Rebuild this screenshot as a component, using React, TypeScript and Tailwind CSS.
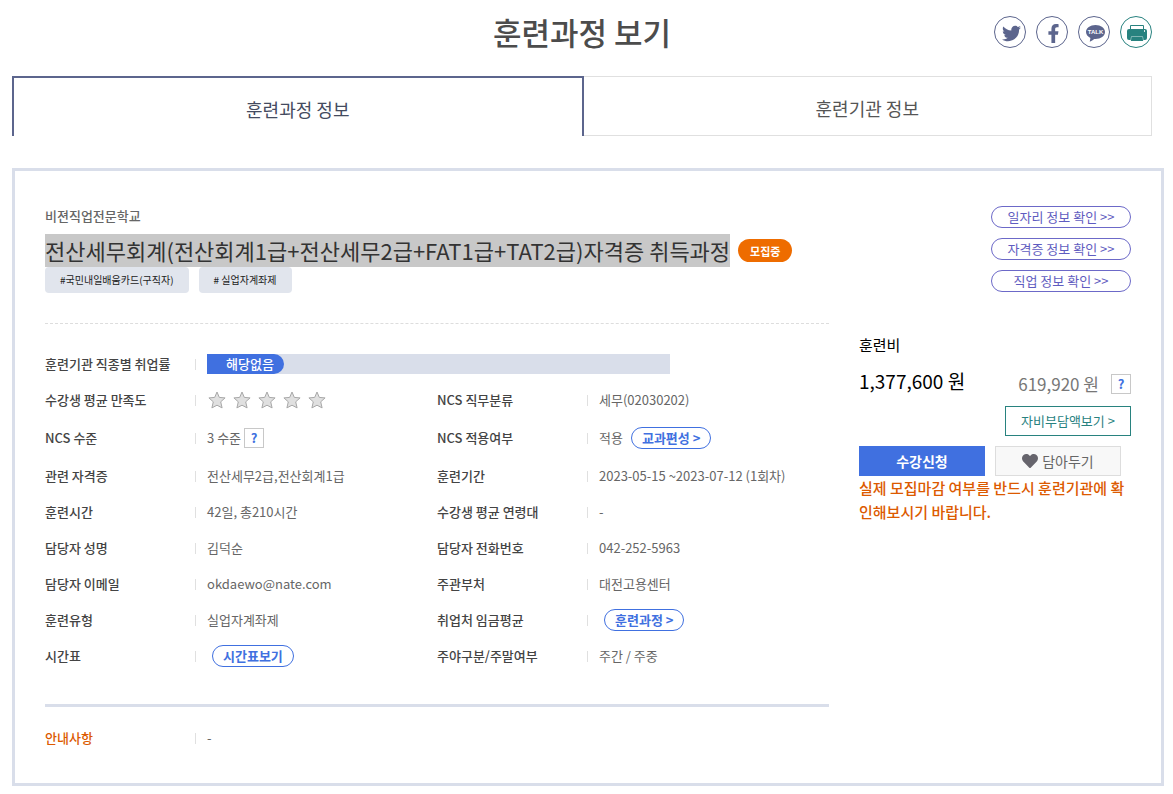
import clsx from "clsx";
import { FC, ReactNode } from "react";
import { FaFacebookF, FaHeart, FaTwitter } from "react-icons/fa";

const TalkIcon: FC = () => (
  <svg viewBox="0 0 38 34" className="h-[17px] w-[19px]" aria-hidden="true">
    <path
      d="M19 0C8.500 0 0 6.300 0 14c0 5 3.500 9.300 8.800 11.800L7.500 33.500c3.500-1.500 6.500-3.800 9-5.600l2.500.1c10.500 0 19-6.300 19-14S29.500 0 19 0z"
      fill="currentColor"
    />
    <text
      x="19"
      y="18"
      textAnchor="middle"
      fill="#fff"
      className="font-['Liberation_Sans',sans-serif] text-[12px] font-bold"
    >
      TALK
    </text>
  </svg>
);

const PrinterIcon: FC = () => (
  <svg viewBox="0 0 20 16" className="h-4 w-5" aria-hidden="true">
    <path d="M3.500 4.500v-4h13v4" fill="none" stroke="currentColor" />
    <path
      d="M2 4h16a2 2 0 0 1 2 2v7a2 2 0 0 1-2 2H2a2 2 0 0 1-2-2V6a2 2 0 0 1 2-2z"
      fill="currentColor"
    />
    <path d="M4.500 11.500h11l.7 4.500H3.800z" fill="currentColor" />
    <path
      d="M3.500 15.500l1-4h11l1 4"
      fill="none"
      stroke="#fff"
      strokeOpacity=".6"
      strokeWidth=".7"
    />
    <rect x="17" y="5" width="1" height="2" fill="#fff" fillOpacity=".8" />
  </svg>
);

const StarIcon: FC = () => (
  <svg viewBox="0 0 18 18" className="size-[18px]" aria-hidden="true">
    <path
      d="M9 1l2.300 5.400 5.800.500-4.400 3.900 1.400 6.100L9 14.200l-5.100 2.700 1.400-6.100L.9 6.900l5.800-.5z"
      fill="#e0e0e0"
      stroke="#a8a8a8"
    />
  </svg>
);

const HelpButton: FC = () => (
  <button
    type="button"
    aria-label="도움말"
    className="flex size-5 items-center justify-center border border-[#c8c8c8] text-[13px] font-bold text-[#4070e0]"
  >
    ?
  </button>
);

const PillButton: FC<{ children: ReactNode }> = ({ children }) => (
  <button
    type="button"
    className="flex h-[22px] items-center rounded-full border border-[#4070e0] px-[10px] text-[13px] font-bold text-[#4070e0]"
  >
    {children}
  </button>
);

type RowProps = {
  label: string;
  children: ReactNode;
  wide?: boolean;
  tall?: boolean;
  notice?: boolean;
};

const Row: FC<RowProps> = ({ label, children, wide, tall, notice }) => (
  <div className={clsx("flex items-center", wide && "col-span-2", tall ? "h-10" : "h-9")}>
    <dt
      className={clsx(
        "w-[150px] shrink-0 font-medium",
        notice ? "text-[#dc5a00]" : "text-[#444]"
      )}
    >
      {label}
    </dt>
    <dd className="flex flex-1 items-center text-[#666]">
      <span className="mr-[11px] h-[11px] w-px shrink-0 bg-[#e0e0e0]" />
      {children}
    </dd>
  </div>
);

const shareItems = [
  { label: "트위터", icon: <FaTwitter className="size-[19px]" />, color: "border-[#5c658d] text-[#5c658d]" },
  { label: "페이스북", icon: <FaFacebookF className="size-[19px]" />, color: "border-[#5c658d] text-[#5c658d]" },
  { label: "카카오톡", icon: <TalkIcon />, color: "border-[#5c658d] text-[#5c658d]" },
  { label: "인쇄", icon: <PrinterIcon />, color: "border-[#28827f] text-[#28827f]" },
];

const infoLinks = ["일자리 정보 확인 >>", "자격증 정보 확인 >>", "직업 정보 확인 >>"];

const Header: FC = () => (
  <header className="grid grid-cols-[1fr_auto_1fr] items-center pt-2">
    <h1 className="col-start-2 text-[31px] leading-[48px] font-medium text-[#4c4c4c]">
      훈련과정 보기
    </h1>
    <div className="flex justify-end gap-[10px]">
      {shareItems.map(({ label, icon, color }) => (
        <button
          key={label}
          type="button"
          aria-label={label}
          className={clsx(
            "flex size-8 items-center justify-center rounded-full border pt-[2px] pl-[2px]",
            color
          )}
        >
          {icon}
        </button>
      ))}
    </div>
  </header>
);

const Tabs: FC = () => (
  <nav className="mt-5 flex h-[60px] text-lg">
    <button type="button" className="flex-1 border-2 border-b-0 border-[#5c658d] pt-1 text-[#444b60]">
      훈련과정 정보
    </button>
    <button type="button" className="flex-1 border border-l-0 border-[#e0e0e0] pt-1 text-[#555]">
      훈련기관 정보
    </button>
  </nav>
);

const CourseDetails: FC = () => (
  <dl className="grid grid-cols-2 pt-[22px]">
    <Row label="훈련기관 직종별 취업률" wide>
      <div className="flex h-5 w-[463px] bg-[#d9deea]">
        <span className="flex items-center rounded-r-full bg-[#4070e0] pr-[10px] pl-[19px] font-medium text-white">
          해당없음
        </span>
      </div>
    </Row>
    <Row label="수강생 평균 만족도">
      <div className="flex gap-[7px] pl-px">
        {[1, 2, 3, 4, 5].map((n) => (
          <StarIcon key={n} />
        ))}
      </div>
    </Row>
    <Row label="NCS 직무분류">세무(02030202)</Row>
    <Row label="NCS 수준" tall>
      <span className="mr-[3px]">3 수준</span>
      <HelpButton />
    </Row>
    <Row label="NCS 적용여부" tall>
      <span className="mr-2">적용</span>
      <PillButton>교과편성 &gt;</PillButton>
    </Row>
    <Row label="관련 자격증">전산세무2급,전산회계1급</Row>
    <Row label="훈련기간">2023-05-15 ~2023-07-12 (1회차)</Row>
    <Row label="훈련시간">42일, 총210시간</Row>
    <Row label="수강생 평균 연령대">-</Row>
    <Row label="담당자 성명">김덕순</Row>
    <Row label="담당자 전화번호">042-252-5963</Row>
    <Row label="담당자 이메일">okdaewo@nate.com</Row>
    <Row label="주관부처">대전고용센터</Row>
    <Row label="훈련유형">실업자계좌제</Row>
    <Row label="취업처 임금평균">
      <div className="pl-[5px]">
        <PillButton>훈련과정 &gt;</PillButton>
      </div>
    </Row>
    <Row label="시간표">
      <div className="pl-[5px]">
        <PillButton>시간표보기</PillButton>
      </div>
    </Row>
    <Row label="주야구분/주말여부">주간 / 주중</Row>
  </dl>
);

const CostPanel: FC = () => (
  <aside className="w-[272px] shrink-0">
    <div className="flex flex-col items-end gap-[10px]">
      {infoLinks.map((text) => (
        <a
          key={text}
          href="#"
          className="flex h-[22px] w-[140px] items-center justify-center rounded-full border border-[#6c69c8] text-[#5f5cc0]"
        >
          {text}
        </a>
      ))}
    </div>

    <h3 className="mt-[41px] text-[15px] leading-6 text-black">훈련비</h3>
    <div className="mt-3 flex items-start justify-between">
      <strong className="text-[19px] leading-6 font-normal text-black">1,377,600 원</strong>
      <div className="flex items-center gap-3 pt-[5px]">
        <span className="text-[17px] leading-5 text-[#777]">619,920 원</span>
        <HelpButton />
      </div>
    </div>
    <button
      type="button"
      className="mt-3 ml-auto block h-[30px] w-[126px] border border-[#28827f] text-[#28827f]"
    >
      자비부담액보기 &gt;
    </button>
    <div className="mt-[10px] flex gap-[10px] text-sm">
      <button type="button" className="h-[30px] w-[126px] bg-[#4070e0] font-bold text-white">
        수강신청
      </button>
      <button
        type="button"
        className="flex h-[30px] w-[126px] items-center justify-center gap-1 border border-[#ddd] bg-[#f8f8f8] text-[#666]"
      >
        <FaHeart className="size-4 text-[#66646c]" />
        담아두기
      </button>
    </div>
    <p className="text-[15px] leading-6 font-medium break-all text-[#dc5a00]">
      실제 모집마감 여부를 반드시 훈련기관에 확인해보시기 바랍니다.
    </p>
  </aside>
);

export default function App() {
  return (
    <main className="bg-white pr-[21px] pl-3 font-['Noto_Sans_CJK_KR',sans-serif]">
      <Header />
      <Tabs />
      <section className="mt-8 -mr-3 flex gap-[30px] border-[3px] border-[#d9deea] px-[30px] pt-[35px] pb-[27px] text-[13px] leading-5">
        <div className="min-w-0 flex-1">
          <p className="font-medium text-[#666]">비젼직업전문학교</p>
          <div className="mt-2 flex items-center gap-2">
            <h2 className="bg-[#c8c8c8] text-[22px] leading-[33px] whitespace-nowrap text-[#333]">
              전산세무회계(전산회계1급+전산세무2급+FAT1급+TAT2급)자격증 취득과정
            </h2>
            <span className="flex h-[23px] shrink-0 items-center rounded-full bg-[#ee6c00] px-3 text-[11px] font-bold text-white">
              모집중
            </span>
          </div>
          <ul className="flex gap-[10px] text-[10px] text-[#222]">
            <li className="flex h-[26px] items-center rounded bg-[#e1e5ed] px-[15px]">
              #국민내일배움카드(구직자)
            </li>
            <li className="flex h-[26px] items-center rounded bg-[#e1e5ed] px-[15px]">
              # 실업자계좌제
            </li>
          </ul>
          <hr className="mt-[30px] border-dashed border-[#ddd]" />
          <CourseDetails />
          <hr className="mt-[30px] border-t-[3px] border-[#d9deea]" />
          <dl className="pt-[13px]">
            <Row label="안내사항" notice>
              -
            </Row>
          </dl>
        </div>
        <CostPanel />
      </section>
    </main>
  );
}
